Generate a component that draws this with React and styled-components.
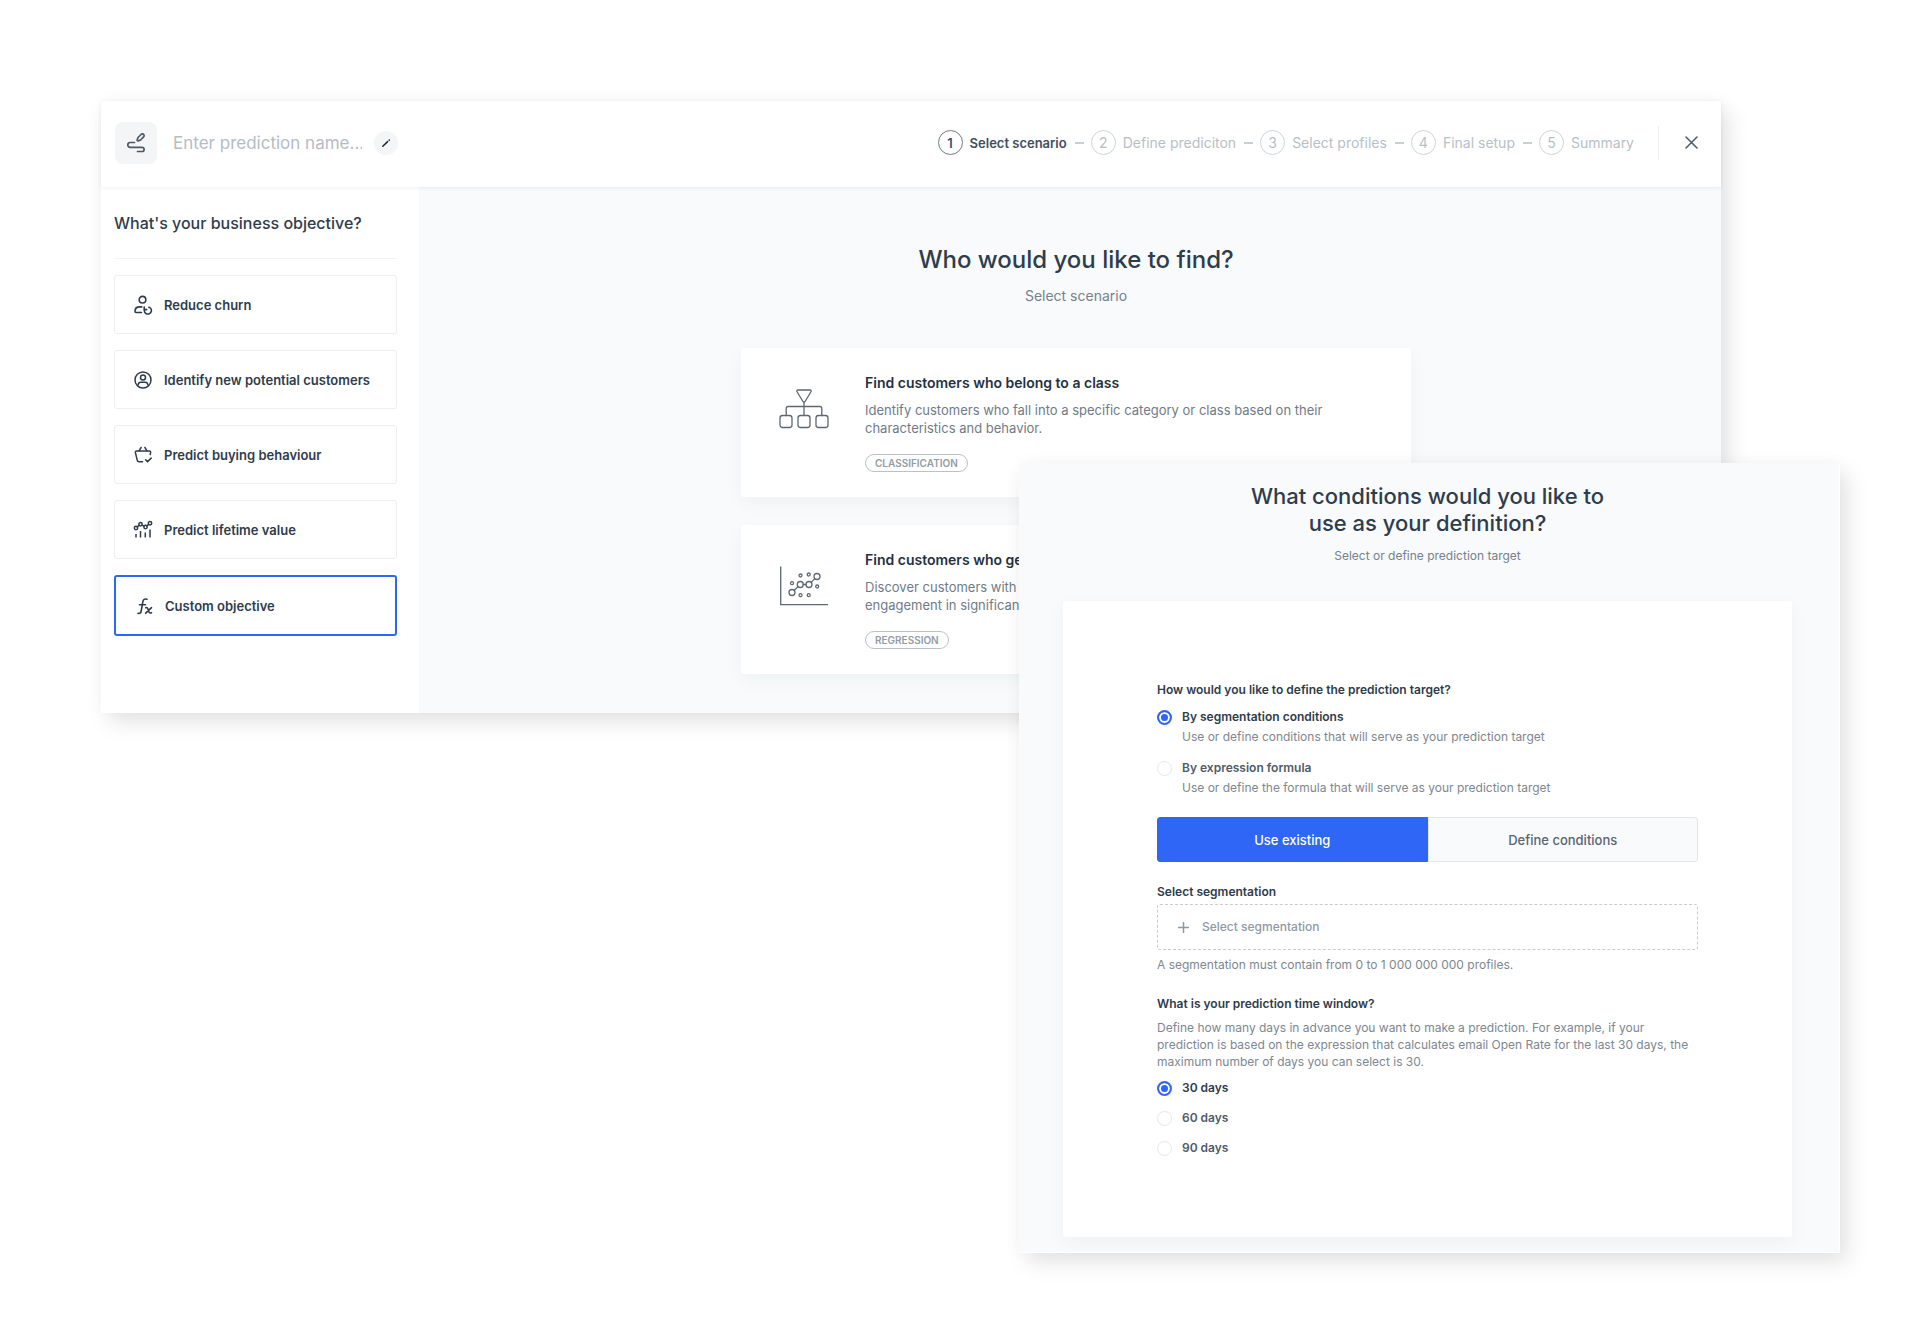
import React, { useState } from 'react'
import styled, { createGlobalStyle, css } from 'styled-components'

const GlobalStyle = createGlobalStyle`
    * { box-sizing: border-box; }

    body {
        margin: 0;
        background: #fff;
        color: #2f3c4b;
        font-family: Inter, "Liberation Sans", sans-serif;
        font-size: 13px;
        line-height: 18px;
    }

    h1, h2, h3, p, ul, ol, fieldset {
        margin: 0;
        padding: 0;
        border: 0;
        list-style: none;
    }

    button, input {
        margin: 0;
        padding: 0;
        border: 0;
        background: none;
        color: inherit;
        font: inherit;
    }

    button { cursor: pointer; }
    svg { display: block; flex: none; }
`

const Stage = styled.div`
    display: grid;
    grid-template-columns: 918fr 702fr 119fr;
    grid-template-rows: 362px 250px auto;
    padding: 101px 80px 80px 101px;
`

const windowShadow = css`
    box-shadow: 8px 10px 22px rgba(0, 0, 0, .1), 0 0 20px rgba(0, 0, 0, .03);
`

const Wizard = styled.section`
    grid-area: 1 / 1 / 3 / 3;
    display: flex;
    flex-direction: column;
    background: #fff;
    border-radius: 2px;
    ${windowShadow}
`

const TopBar = styled.header`
    display: flex;
    align-items: center;
    height: 86px;
    padding: 0 23px 3px 14px;
    box-shadow: 0 1px 4px rgba(30, 45, 60, .08);
    z-index: 1;
`

const LogoTile = styled.div`
    display: grid;
    place-items: center;
    width: 42px;
    height: 42px;
    border-radius: 8px;
    background: #f3f5f7;
    color: #4d5967;
`

const NameInput = styled.input`
    width: 189px;
    margin: 0 12px 0 16px;
    font-size: 17px;
    line-height: 24px;
    outline: none;

    &::placeholder {
        color: #b5bdc4;
        opacity: 1;
    }
`

const EditButton = styled.button`
    display: grid;
    place-items: center;
    width: 24px;
    height: 24px;
    border-radius: 50%;
    background: #f3f5f7;
    color: #1d2733;
`

const Steps = styled.ol`
    display: flex;
    align-items: center;
    gap: 8px;
    margin-left: auto;
`

const Step = styled.li`
    display: flex;
    align-items: center;
    gap: 7px;
    color: ${({ $active }) => ($active ? '#414e5d' : '#b8c0c7')};
    font-size: ${({ $active }) => ($active ? 13 : 14)}px;
    font-weight: ${({ $active }) => ($active ? 600 : 400)};

    &:not(:first-child)::before {
        content: '';
        width: 9px;
        height: 2px;
        background: #c9cfd4;
    }
`

const StepNumber = styled.span`
    display: grid;
    place-items: center;
    width: 25px;
    height: 25px;
    border: 1px solid ${({ $active }) => ($active ? '#727d89' : '#cfd5da')};
    border-radius: 50%;
`

const CloseButton = styled.button`
    display: grid;
    place-items: center;
    height: 34px;
    margin-left: 24px;
    padding-left: 26px;
    border-left: 1px solid #eceff1;
    color: #4d5967;
`

const Body = styled.div`
    flex: 1;
    display: flex;
`

const Sidebar = styled.aside`
    width: 318px;
    padding: 24px 22px 0 13px;
`

const SidebarTitle = styled.h2`
    padding-bottom: 23px;
    border-bottom: 1px solid #f1f3f4;
    font-size: 16px;
    font-weight: 500;
    line-height: 24px;
`

const Objectives = styled.ul`
    display: grid;
    gap: 16px;
    padding-top: 16px;
`

const ObjectiveButton = styled.button`
    display: flex;
    align-items: center;
    gap: 11px;
    width: 100%;
    height: ${({ $selected }) => ($selected ? 61 : 59)}px;
    padding-left: 18px;
    border: ${({ $selected }) => ($selected ? '2px solid #2f66f5' : '1px solid #eceef0')};
    border-radius: 3px;
    font-size: 13px;
    font-weight: 600;
    text-align: left;
`

const Scenarios = styled.main`
    flex: 1;
    display: flex;
    flex-direction: column;
    align-items: center;
    padding: 56px 0 0 12px;
    background: #f8fafb;
`

const Title = styled.h1`
    font-size: ${({ $small }) => ($small ? 22 : 24)}px;
    font-weight: 500;
    line-height: ${({ $small }) => ($small ? 27 : 34)}px;
    text-align: center;
`

const Subtitle = styled.p`
    margin-top: 10px;
    color: #76818c;
    font-size: ${({ $small }) => ($small ? 12 : 14)}px;
    line-height: 18px;
    text-align: center;
`

const cardShadow = css`
    box-shadow: 0 6px 18px rgba(30, 45, 60, .04);
`

const ScenarioCard = styled.article`
    display: flex;
    gap: 36px;
    width: 670px;
    height: 149px;
    margin-top: ${({ $first }) => ($first ? 43 : 28)}px;
    padding: 26px 38px 0;
    border-radius: 3px;
    background: #fff;
    ${cardShadow}

    svg { margin-top: 15px; color: #5c6873; }
`

const ScenarioText = styled.div`
    h3 {
        margin-bottom: 9px;
        color: #25313f;
        font-size: 14px;
        font-weight: 600;
    }

    p {
        color: #707b87;
    }
`

const Tag = styled.span`
    display: inline-block;
    height: 18px;
    margin-top: 17px;
    padding: 0 9px;
    border: 1px solid #b9c1c8;
    border-radius: 9px;
    color: #929ca5;
    font-size: 10px;
    font-weight: 600;
    line-height: 16px;
`

const Dialog = styled.section`
    grid-area: 2 / 2 / 4 / 4;
    z-index: 2;
    padding: 20px 47px 15px 44px;
    background: #f8fafb;
    border-right: 1px solid #fff;
    border-bottom: 1px solid #fff;
    border-radius: 2px;
    ${windowShadow}
`

const Form = styled.form`
    height: 636px;
    margin-top: 36px;
    padding: 80px 94px 0;
    border-radius: 3px;
    background: #fff;
    ${cardShadow}
`

const Question = styled.legend`
    padding: 0;
    font-size: 12px;
    font-weight: 600;
`

const RadioLabel = styled.label`
    display: grid;
    grid-template-columns: 15px 1fr;
    column-gap: 10px;
    align-items: center;
    margin-top: ${({ $gap }) => $gap}px;
    color: ${({ $checked }) => ($checked ? '#2f3c4b' : '#4f5b68')};
    font-size: 12px;
    font-weight: 600;

    small {
        grid-column: 2;
        margin-top: 2px;
        color: #7d8791;
        font-size: 12px;
        font-weight: 400;
    }
`

const Radio = styled.input`
    appearance: none;
    width: 15px;
    height: 15px;
    border: 1px solid #e4e8eb;
    border-radius: 50%;

    &:checked {
        border: 2px solid #2f66f5;
        background: #2f66f5;
        box-shadow: inset 0 0 0 2px #fff;
    }
`

const Toggle = styled.div`
    display: grid;
    grid-template-columns: 1fr 1fr;
    margin-top: 20px;
`

const ToggleButton = styled.button`
    height: 45px;
    border: 1px solid ${({ $active }) => ($active ? '#2f66f5' : '#e3e7ea')};
    border-radius: ${({ $active }) => ($active ? '3px 0 0 3px' : '0 3px 3px 0')};
    background: ${({ $active }) => ($active ? '#2f66f5' : '#f8fafb')};
    color: ${({ $active }) => ($active ? '#fff' : '#5a6571')};
    font-weight: 500;
`

const FieldLabel = styled.label`
    display: block;
    margin-top: 21px;
    font-size: 12px;
    font-weight: 600;
`

const SegmentationButton = styled.button`
    display: flex;
    align-items: center;
    gap: 13px;
    width: 100%;
    height: 46px;
    margin-top: 3px;
    padding-left: 20px;
    border: 1px dashed #c6ccd1;
    border-radius: 3px;
    color: #8f99a3;
    font-size: 12px;
    font-weight: 500;
`

const Note = styled.p`
    margin-top: 6px;
    color: #7d8791;
    font-size: 12px;
    line-height: 17px;
`

const DaysField = styled.fieldset`
    margin-top: 22px;
`

const line = {
    fill: 'none',
    stroke: 'currentColor',
    strokeLinecap: 'round',
    strokeLinejoin: 'round',
}

function LogoIcon() {
    return (
        <svg width="20" height="20" viewBox="0 0 20 20" strokeWidth="1.7" {...line}>
            <path d="M8.500 9.500H4.200a2.400 2.400 0 0 0 0 4.800H16a2.100 2.100 0 0 1 0 4.200h-4.500" />
            <path d="M11.200 6.900 12 4.500 15.100 1.500a1.700 1.700 0 0 1 2.500 2.400L14.600 7l-2.400.9a.8.8 0 0 1-1-1z" />
        </svg>
    )
}

function PencilIcon() {
    return (
        <svg width="10" height="10" viewBox="0 0 10 10" strokeWidth="1.500" {...line}>
            <path d="M1.800 8.200 6.600 3.600M8.200 2.100l.1-.1" />
        </svg>
    )
}

function CrossIcon() {
    return (
        <svg width="13" height="13" viewBox="0 0 13 13" strokeWidth="1.500" {...line}>
            <path d="M1 1l11 11M12 1 1 12" />
        </svg>
    )
}

function ChurnIcon() {
    return (
        <svg width="20" height="20" viewBox="0 0 20 20" strokeWidth="1.600" {...line}>
            <circle cx="9.500" cy="4.700" r="3.300" />
            <path d="M8.500 17.500H3a1 1 0 0 1-1-1c0-2.800 1.900-4.600 4.600-4.600h2.200" />
            <path d="M11.200 12.100v2.500h2.500" />
            <path d="M11.500 14.600a3.500 3.500 0 1 0 4.400-2.400" />
        </svg>
    )
}

function PersonIcon() {
    return (
        <svg width="20" height="20" viewBox="0 0 20 20" strokeWidth="1.500" {...line}>
            <circle cx="10" cy="10" r="8" />
            <circle cx="10" cy="7.500" r="2.500" />
            <path d="M5.100 15c.2-1.900 1.300-2.800 2.900-2.800h4c1.600 0 2.700.9 2.900 2.800" />
        </svg>
    )
}

function BasketIcon() {
    return (
        <svg width="20" height="20" viewBox="0 0 20 20" strokeWidth="1.500" {...line}>
            <path d="M9.500 16.800H6.200a2 2 0 0 1-2-1.700L2.400 7.600a1.200 1.200 0 0 1 1.200-1.500h12.800a1.200 1.200 0 0 1 1.200 1.500l-.4 1.900" />
            <path d="M6 5.900 8.100 2.500M14 5.900l-2.100-3.400M12.600 14.700l1.900 1.900 3.700-3.500" />
        </svg>
    )
}

function LifetimeIcon() {
    return (
        <svg width="20" height="20" viewBox="0 0 20 20" strokeWidth="1.500" {...line}>
            <circle cx="3" cy="8" r="1.700" />
            <circle cx="7.500" cy="4.200" r="1.700" />
            <circle cx="12.500" cy="7" r="1.700" />
            <circle cx="17" cy="3.300" r="1.700" />
            <path d="M4.300 6.900 6.200 5.300M9 5.100l2 1.100M13.800 5.900l1.900-1.500" />
            <path d="M3 14v3.500M7.500 11v6.500M12.300 12.500v5M17 9.500v8" strokeLinecap="butt" />
        </svg>
    )
}

function FormulaIcon() {
    return (
        <svg width="20" height="20" viewBox="0 0 20 20" strokeWidth="1.600" {...line}>
            <path d="M13 3.300c-2.500-.8-3.800.2-4.200 2.600L7.200 15c-.4 2.200-1.500 2.900-3.200 2.300M5.500 8.700h6" />
            <path d="M11.700 11.700c1.300-.5 1.800.1 2.400 1.700l.7 2c.5 1.500 1.200 2 2.700 1.300M17.500 11.700l-5.800 5.500" />
        </svg>
    )
}

function ClassesIcon() {
    return (
        <svg width="50" height="40" viewBox="0 0 50 40" strokeWidth="1.300" {...line}>
            <path d="M18.800 1h12.400a1 1 0 0 1 .9 1.500l-6 10a1.200 1.200 0 0 1-2.200 0l-6-10A1 1 0 0 1 18.800 1z" />
            <path d="M25 13v13.500M7.200 26.500v-7a2 2 0 0 1 2-2h31.600a2 2 0 0 1 2 2v7" />
            <rect x="1" y="26.500" width="12" height="12" rx="2.500" />
            <rect x="19" y="26.500" width="12" height="12" rx="2.500" />
            <rect x="37" y="26.500" width="12" height="12" rx="2.500" />
        </svg>
    )
}

function ScatterIcon() {
    return (
        <svg width="50" height="40" viewBox="0 0 50 40" strokeWidth="1.300" {...line}>
            <path d="M1.700 1v37.700H48.500" />
            <circle cx="13" cy="26.500" r="3" />
            <circle cx="21.300" cy="18.500" r="3" />
            <circle cx="30" cy="18.500" r="3" />
            <circle cx="38" cy="10.500" r="3" />
            <path d="M15.200 24.300l4-3.700M24.300 18.500H27M32.100 16.400l3.800-3.800" />
            <circle cx="13" cy="17.200" r="1.500" />
            <circle cx="21.500" cy="9.500" r="1.500" />
            <circle cx="29.700" cy="8.500" r="1.500" />
            <circle cx="38.200" cy="20.500" r="1.500" />
            <circle cx="21.500" cy="29.200" r="1.500" />
            <circle cx="29.700" cy="29.200" r="1.500" />
        </svg>
    )
}

function PlusIcon() {
    return (
        <svg width="11" height="11" viewBox="0 0 11 11" strokeWidth="1.500" {...line}>
            <path d="M5.500.5v10M.5 5.500h10" />
        </svg>
    )
}

const steps = ['Select scenario', 'Define prediciton', 'Select profiles', 'Final setup', 'Summary']

const objectives = [
    { name: 'Reduce churn', Icon: ChurnIcon },
    { name: 'Identify new potential customers', Icon: PersonIcon },
    { name: 'Predict buying behaviour', Icon: BasketIcon },
    { name: 'Predict lifetime value', Icon: LifetimeIcon },
    { name: 'Custom objective', Icon: FormulaIcon },
]

const targets = [
    { name: 'By segmentation conditions', hint: 'Use or define conditions that will serve as your prediction target' },
    { name: 'By expression formula', hint: 'Use or define the formula that will serve as your prediction target' },
]

function PredictionWizard() {
    const [objective, setObjective] = useState('Custom objective')

    return (
        <Wizard>
            <TopBar>
                <LogoTile><LogoIcon /></LogoTile>
                <NameInput placeholder="Enter prediction name..." aria-label="Prediction name" />
                <EditButton aria-label="Edit name"><PencilIcon /></EditButton>
                <Steps>
                    {steps.map((step, i) => (
                        <Step key={step} $active={i === 0}>
                            <StepNumber $active={i === 0}>{i + 1}</StepNumber>
                            {step}
                        </Step>
                    ))}
                </Steps>
                <CloseButton aria-label="Close"><CrossIcon /></CloseButton>
            </TopBar>
            <Body>
                <Sidebar>
                    <SidebarTitle>What's your business objective?</SidebarTitle>
                    <Objectives>
                        {objectives.map(({ name, Icon }) => (
                            <li key={name}>
                                <ObjectiveButton $selected={name === objective} onClick={() => setObjective(name)}>
                                    <Icon />
                                    {name}
                                </ObjectiveButton>
                            </li>
                        ))}
                    </Objectives>
                </Sidebar>
                <Scenarios>
                    <Title>Who would you like to find?</Title>
                    <Subtitle>Select scenario</Subtitle>
                    <ScenarioCard $first>
                        <ClassesIcon />
                        <ScenarioText>
                            <h3>Find customers who belong to a class</h3>
                            <p>
                                Identify customers who fall into a specific category or class based on their
                                <br />characteristics and behavior.
                            </p>
                            <Tag>CLASSIFICATION</Tag>
                        </ScenarioText>
                    </ScenarioCard>
                    <ScenarioCard>
                        <ScatterIcon />
                        <ScenarioText>
                            <h3>Find customers who generate value</h3>
                            <p>
                                Discover customers with high value
                                <br />engagement in significant areas.
                            </p>
                            <Tag>REGRESSION</Tag>
                        </ScenarioText>
                    </ScenarioCard>
                </Scenarios>
            </Body>
        </Wizard>
    )
}

function ConditionsDialog() {
    const [target, setTarget] = useState(targets[0].name)
    const [mode, setMode] = useState('Use existing')
    const [days, setDays] = useState(30)

    return (
        <Dialog>
            <Title $small>What conditions would you like to<br />use as your definition?</Title>
            <Subtitle $small>Select or define prediction target</Subtitle>
            <Form onSubmit={(e) => e.preventDefault()}>
                <fieldset>
                    <Question>How would you like to define the prediction target?</Question>
                    {targets.map(({ name, hint }, i) => (
                        <RadioLabel key={name} $gap={i === 0 ? 9 : 13} $checked={target === name}>
                            <Radio type="radio" name="target" checked={target === name} onChange={() => setTarget(name)} />
                            {name}
                            <small>{hint}</small>
                        </RadioLabel>
                    ))}
                </fieldset>
                <Toggle>
                    {['Use existing', 'Define conditions'].map(name => (
                        <ToggleButton key={name} type="button" $active={mode === name} onClick={() => setMode(name)}>
                            {name}
                        </ToggleButton>
                    ))}
                </Toggle>
                <FieldLabel htmlFor="segmentation">Select segmentation</FieldLabel>
                <SegmentationButton id="segmentation" type="button"><PlusIcon />Select segmentation</SegmentationButton>
                <Note>A segmentation must contain from 0 to 1 000 000 000 profiles.</Note>
                <DaysField>
                    <Question>What is your prediction time window?</Question>
                    <Note>
                        Define how many days in advance you want to make a prediction. For example, if your
                        <br />prediction is based on the expression that calculates email Open Rate for the last 30 days, the
                        <br />maximum number of days you can select is 30.
                    </Note>
                    {[30, 60, 90].map((n, i) => (
                        <RadioLabel key={n} $gap={i === 0 ? 9 : 12} $checked={days === n}>
                            <Radio type="radio" name="days" checked={days === n} onChange={() => setDays(n)} />
                            {n} days
                        </RadioLabel>
                    ))}
                </DaysField>
            </Form>
        </Dialog>
    )
}

export default function App() {
    return (
        <>
            <GlobalStyle />
            <Stage>
                <PredictionWizard />
                <ConditionsDialog />
            </Stage>
        </>
    )
}
